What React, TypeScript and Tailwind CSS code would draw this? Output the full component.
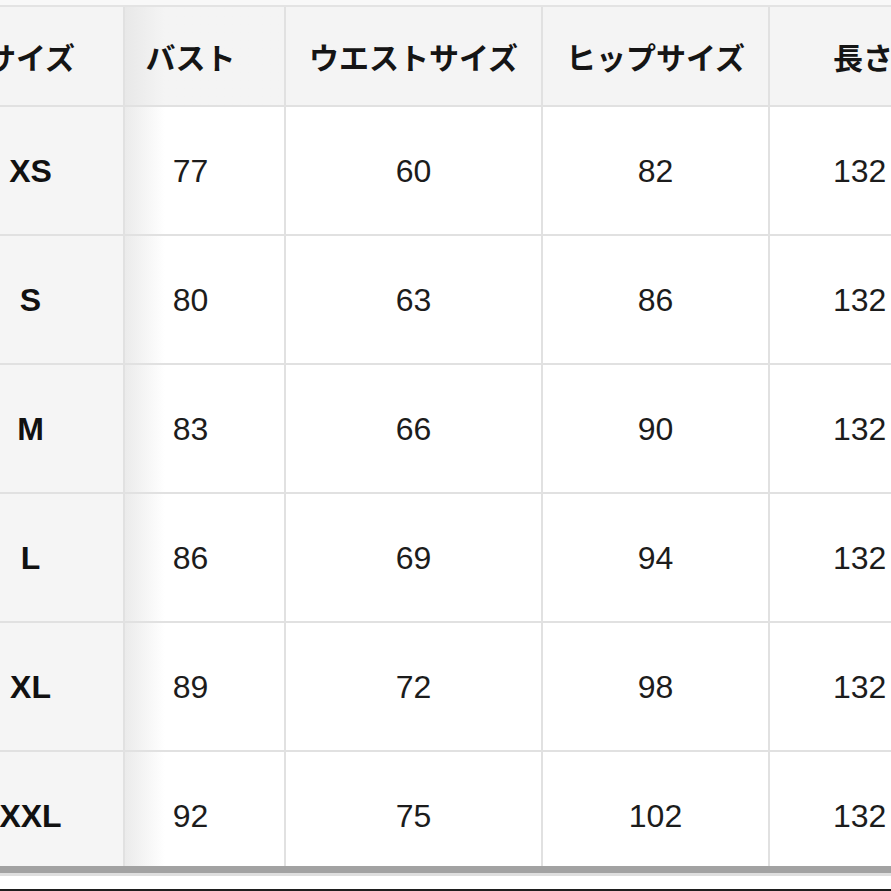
const HEADERS = ["サイズ", "バスト", "ウエストサイズ", "ヒップサイズ", "長さ"];

const ROWS: [string, number, number, number, number][] = [
  ["XS", 77, 60, 82, 132],
  ["S", 80, 63, 86, 132],
  ["M", 83, 66, 90, 132],
  ["L", 86, 69, 94, 132],
  ["XL", 89, 72, 98, 132],
  ["XXL", 92, 75, 102, 132],
];

const GRID = "grid grid-cols-[187px_161px_257px_227px_184px]";
const CELL = "flex items-center justify-center border-r-2 border-b-2 border-[#e1e1e1]";

export default function App() {
  return (
    <div className="flex h-[891px] w-[891px] flex-col overflow-hidden bg-white">
      <div className="h-[5px] bg-[#f8f8f8]" />
      <div className="h-[861px] overflow-hidden border-t-2 border-[#e3e3e3]">
        <div className="ml-[-62px] w-max">
          {/* header */}
          <div className={`${GRID} h-[100px] bg-[#f4f4f4] font-['Noto_Sans_CJK_JP',sans-serif] text-[30px] font-bold text-[#151515]`}>
            {HEADERS.map((h, i) => (
              <div
                key={h}
                className={`${CELL} ${i === 1 ? "bg-linear-to-r from-[#e8e8e8] to-[#f4f4f4] to-25% pr-[28px]" : ""} ${i === 4 ? "justify-start pl-[63px]" : ""}`}
              >
                {h}
              </div>
            ))}
          </div>

          {/* body */}
          {ROWS.map(([size, bust, waist, hip, len]) => (
            <div key={size} className={`${GRID} h-[129px] font-['Liberation_Sans',Arial,sans-serif] text-[32px] text-[#1c1c1c]`}>
              <div className={`${CELL} bg-[#f5f5f5] font-bold text-[#111]`}>{size}</div>
              <div className={`${CELL} bg-linear-to-r from-[#ebebeb] to-white to-25% pr-[28px]`}>{bust}</div>
              <div className={CELL}>{waist}</div>
              <div className={CELL}>{hip}</div>
              <div className={`${CELL} justify-start pl-[63px]`}>{len}</div>
            </div>
          ))}
        </div>
      </div>
      <div className="h-[7px] bg-[#a2a2a2]" />
      <div className="h-[3px] bg-[#dedede]" />
      <div className="flex-1 bg-white" />
      <div className="h-[2px] bg-[#1e1e1e]" />
    </div>
  );
}
